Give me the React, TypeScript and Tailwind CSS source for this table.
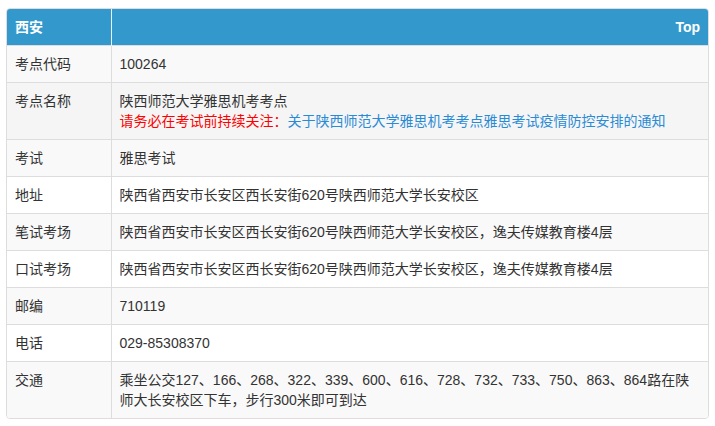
import React from 'react';

const rows: { label: string; value: React.ReactNode }[] = [
  { label: '考点代码', value: '100264' },
  {
    label: '考点名称',
    value: (
      <>
        陕西师范大学雅思机考考点
        <br />
        <span className="text-[#ff0000]">请务必在考试前持续关注：</span>
        <a className="text-[#2a8bd5]">关于陕西师范大学雅思机考考点雅思考试疫情防控安排的通知</a>
      </>
    ),
  },
  { label: '考试', value: '雅思考试' },
  { label: '地址', value: '陕西省西安市长安区西长安街620号陕西师范大学长安校区' },
  { label: '笔试考场', value: '陕西省西安市长安区西长安街620号陕西师范大学长安校区，逸夫传媒教育楼4层' },
  { label: '口试考场', value: '陕西省西安市长安区西长安街620号陕西师范大学长安校区，逸夫传媒教育楼4层' },
  { label: '邮编', value: '710119' },
  { label: '电话', value: '029-85308370' },
  {
    label: '交通',
    value: '乘坐公交127、166、268、322、339、600、616、728、732、733、750、863、864路在陕师大长安校区下车，步行300米即可到达',
  },
];

const rowBg = (i: number) => {
  if (i === 1) return 'bg-[#f5f5f5]';
  return i % 2 === 0 ? 'bg-[#f9f9f9]' : 'bg-white';
};

const App = () => {
  return (
    <div className="min-h-screen bg-white pl-[6px] pt-[8px] font-['Liberation_Sans','Noto_Sans_CJK_SC',sans-serif] text-[14px] leading-[20px] text-[#333]">
      <div className="w-[703px] overflow-hidden rounded-[4px] border border-[#ddd]">
        <table className="w-full border-collapse">
          <thead>
            <tr className="bg-[#3399cc] text-white">
              <th className="w-[104px] border-r border-[#e6f2f8] px-[8px] py-[8px] text-left font-bold">西安</th>
              <th className="px-[8px] py-[8px] text-right font-bold">Top</th>
            </tr>
          </thead>
          <tbody>
            {rows.map((r, i) => (
              <tr key={r.label} className={rowBg(i)}>
                <td className="border-t border-r border-[#ddd] px-[8px] py-[8px] align-top">{r.label}</td>
                <td className="border-t border-[#ddd] px-[8px] py-[8px] align-top">{r.value}</td>
              </tr>
            ))}
          </tbody>
        </table>
      </div>
    </div>
  );
};

export default App;
